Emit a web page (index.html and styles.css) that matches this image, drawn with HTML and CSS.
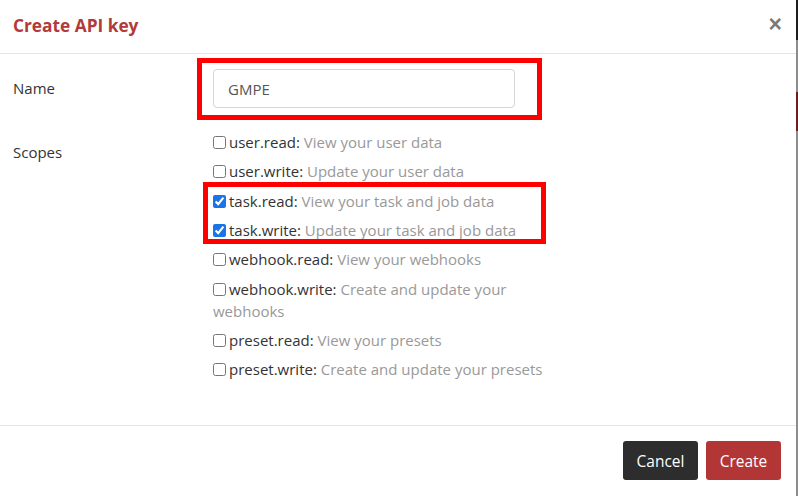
FILE: index.html
```html
<!DOCTYPE html>
<html lang="en">
<head>
<meta charset="utf-8">
<title>Create API key</title>
<link rel="stylesheet" href="styles.css">
</head>
<body>
<div class="modal">
  <div class="modal-header">
    <h4 class="modal-title">Create API key</h4>
    <button class="close" type="button" aria-label="Close">&times;</button>
  </div>
  <div class="modal-body">
    <div class="form-row">
      <label class="form-label label-name" for="name">Name</label>
      <div class="form-field">
        <input id="name" class="text-input" type="text" value="GMPE">
      </div>
    </div>
    <div class="form-row">
      <div class="form-label label-scopes">Scopes</div>
      <div class="form-field scopes">
        <label class="scope"><input type="checkbox"><span class="scope-name">user.read:</span> <span class="scope-desc">View your user data</span></label>
        <label class="scope"><input type="checkbox"><span class="scope-name">user.write:</span> <span class="scope-desc">Update your user data</span></label>
        <label class="scope"><input type="checkbox" checked><span class="scope-name">task.read:</span> <span class="scope-desc">View your task and job data</span></label>
        <label class="scope"><input type="checkbox" checked><span class="scope-name">task.write:</span> <span class="scope-desc">Update your task and job data</span></label>
        <label class="scope"><input type="checkbox"><span class="scope-name">webhook.read:</span> <span class="scope-desc">View your webhooks</span></label>
        <label class="scope"><input type="checkbox"><span class="scope-name">webhook.write:</span> <span class="scope-desc">Create and update your webhooks</span></label>
        <label class="scope"><input type="checkbox"><span class="scope-name">preset.read:</span> <span class="scope-desc">View your presets</span></label>
        <label class="scope"><input type="checkbox"><span class="scope-name">preset.write:</span> <span class="scope-desc">Create and update your presets</span></label>
      </div>
    </div>
  </div>
  <div class="modal-footer">
    <button class="btn btn-dark" type="button">Cancel</button>
    <button class="btn btn-red" type="button">Create</button>
  </div>
  <div class="highlight highlight-name"></div>
  <div class="highlight highlight-task"></div>
</div>
</body>
</html>
```
FILE: styles.css
```css
* { box-sizing: border-box; }

html, body {
  margin: 0;
  height: 100%;
}

body {
  font-family: "Open Sans", "Liberation Sans", sans-serif;
  font-size: 15px;
  color: #333;
  background: linear-gradient(to bottom,
    #1f1f1f 0, #1f1f1f 40px,
    #8c8c8c 40px, #8c8c8c 92px,
    #6a1f1f 92px, #6a1f1f 131px,
    #8c8c8c 131px, #8c8c8c 100%);
  overflow: hidden;
}

.modal {
  position: relative;
  width: 796px;
  height: 496px;
  background: #fff;
  display: flex;
  flex-direction: column;
}

.modal-header {
  height: 54px;
  flex: none;
  border-bottom: 1px solid #e5e5e5;
  display: flex;
  align-items: center;
  justify-content: space-between;
  padding: 0 15px 0 13px;
}

.modal-title {
  margin: 0;
  font-size: 17.3px;
  font-weight: 700;
  color: #b13a3a;
  line-height: 22px;
  padding-bottom: 2px;
}

.close {
  border: 0;
  background: none;
  padding: 0;
  font-family: "Liberation Sans", sans-serif;
  font-size: 23px;
  font-weight: 700;
  line-height: 1;
  color: #7a7a7a;
  margin-right: -1px;
  padding-bottom: 4px;
  cursor: pointer;
}

.modal-body {
  flex: 1;
  padding: 15px 0 0 13px;
}

.form-row {
  display: grid;
  grid-template-columns: 200px 348px;
}

.form-row + .form-row {
  margin-top: 23px;
}

.form-label {
  line-height: 22px;
  color: #333;
}

.label-name { padding-top: 8px; }
.label-scopes { padding-top: 10px; }

.text-input {
  width: 302px;
  height: 39px;
  border: 1px solid #d6d6d6;
  border-radius: 4px;
  padding: 0 14px;
  font: inherit;
  font-size: 15px;
  color: #555;
  background: #fff;
}

.scopes {
  display: flex;
  flex-direction: column;
  gap: 7.33px;
}

.scope {
  display: block;
  line-height: 22px;
}

.scope input {
  margin: 0 3px 0 0;
  width: 13px;
  height: 13px;
  vertical-align: -1px;
  accent-color: #1a73e8;
}

.scope-name { color: #333; }
.scope-desc { color: #999; }

.modal-footer {
  height: 71px;
  flex: none;
  border-top: 1px solid #e5e5e5;
  display: flex;
  justify-content: flex-end;
  align-items: flex-start;
  gap: 8px;
  padding: 15px 15px 0 0;
}

.btn {
  height: 39px;
  width: 75px;
  border: 0;
  border-radius: 3px;
  font: inherit;
  font-size: 15.5px;
  color: #fff;
  cursor: pointer;
}

.btn-dark { background: #2d2d2d; }
.btn-red { background: #b33636; }

.highlight {
  position: absolute;
  border: 5px solid #ff0000;
  pointer-events: none;
}

.highlight-name {
  left: 197px;
  top: 58px;
  width: 345px;
  height: 62px;
}

.highlight-task {
  left: 203px;
  top: 182px;
  width: 343px;
  height: 62px;
}
```
